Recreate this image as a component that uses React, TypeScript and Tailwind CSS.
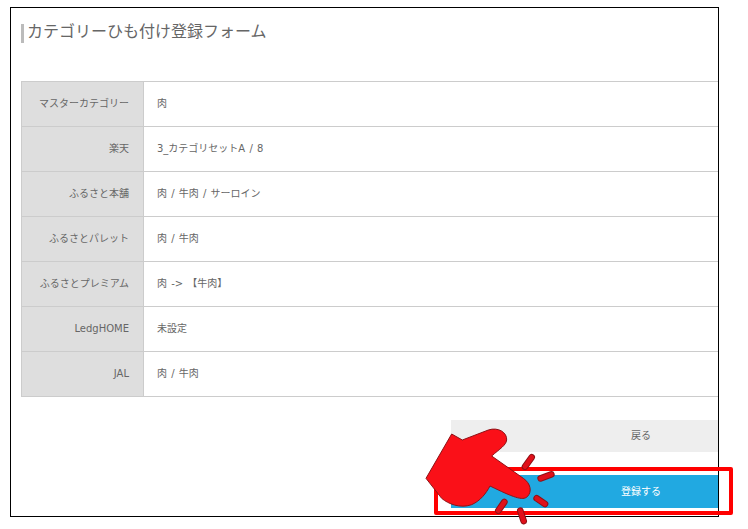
import React from 'react';

const rows = [
  { label: 'マスターカテゴリー', value: '肉' },
  { label: '楽天', value: '3_カテゴリセットA / 8' },
  { label: 'ふるさと本舗', value: '肉 / 牛肉 / サーロイン' },
  { label: 'ふるさとパレット', value: '肉 / 牛肉' },
  { label: 'ふるさとプレミアム', value: '肉 -> 【牛肉】' },
  { label: 'LedgHOME', value: '未設定' },
  { label: 'JAL', value: '肉 / 牛肉' },
];

const sparks = [
  'M345 200 L365 172',
  'M392 235 L424 223',
  'M380 295 L405 312',
  'M283 306 L265 332',
  'M331 332 L341 363',
];

const App: React.FC = () => {
  return (
    <div className="relative w-[748px] h-[529px] overflow-hidden bg-white font-['DejaVu_Sans','Noto_Sans_CJK_JP',sans-serif] text-[#666]">
      <div className="ml-[10px] mt-[7px] w-[709px] h-[510px] border border-black pl-[10px] pt-[16px] overflow-hidden">
        <h1 className="border-l-[3px] border-[#bbb] pl-[3px] pb-[2px] h-[19px] text-[16px] leading-[16px] font-normal text-[#666]">
          カテゴリーひも付け登録フォーム
        </h1>

        {/* テーブル */}
        <div className="mt-[38px] border-t border-[#ccc]">
          {rows.map((r) => (
            <div key={r.label} className="flex h-[45px] border-b border-[#ccc] text-[10px] leading-[10px] [word-spacing:1px]">
              <div className="w-[123px] shrink-0 bg-[#dedede] border-x border-[#ccc] flex items-center justify-end pr-[14px] pb-[1px]">
                {r.label}
              </div>
              <div className="flex-1 flex items-center pl-[13px] pb-[1px]">{r.value}</div>
            </div>
          ))}
        </div>

        {/* はみ出すボタン */}
        <div className="mt-[23px] ml-[430px] w-[380px] flex flex-col gap-[23px] text-[10px]">
          <div className="h-[32px] bg-[#eee] flex items-center justify-center pb-[2px]">戻る</div>
          <div className="h-[33px] bg-[#21a9e1] text-white flex items-center justify-center">登録する</div>
        </div>
      </div>

      {/* 赤枠 */}
      <div className="absolute left-[434px] top-[467px] w-[299px] h-[48px] border-[4px] border-[#ff0000] rounded-[2px]"></div>

      {/* 指アイコン */}
      <svg className="absolute left-[410px] top-[400px]" width="338" height="129" viewBox="0 0 1014 387">
        <path
          d="M48 235 L125 102 L157 120 L235 90 C265 80 292 98 290 120 C288 136 270 146 245 168 L340 235 C362 250 367 275 352 290 C338 303 310 292 240 258 C228 280 212 302 185 314 C150 326 115 312 95 295 Z"
          fill="#fa1018"
          stroke="#8e1116"
          strokeWidth="3"
          strokeLinejoin="round"
        />
        {sparks.map((d) => (
          <g key={d}>
            <path d={d} stroke="#8e1116" strokeWidth="20" strokeLinecap="round" />
            <path d={d} stroke="#e0101a" strokeWidth="14" strokeLinecap="round" />
          </g>
        ))}
      </svg>
    </div>
  );
};

export default App;
